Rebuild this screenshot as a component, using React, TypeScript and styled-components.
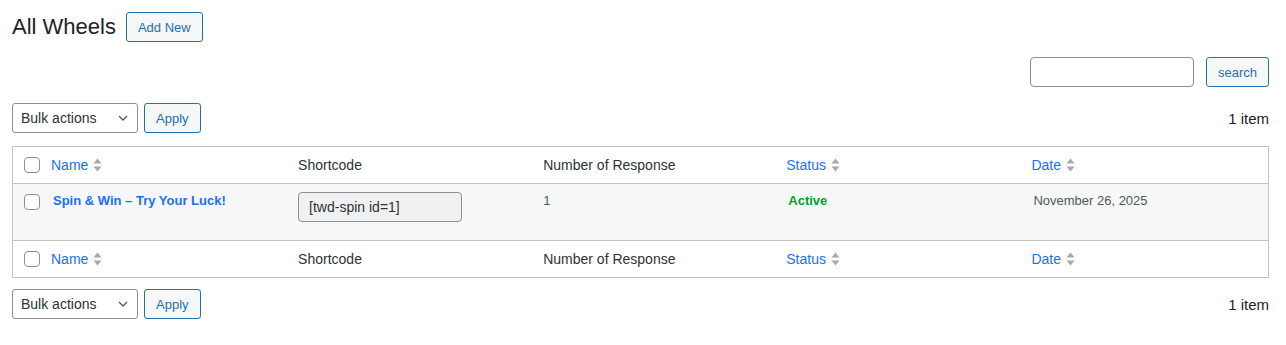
import styled, {createGlobalStyle} from "styled-components";

const GlobalStyle = createGlobalStyle`
body {
    margin: 0;
    background: #fff;
    font-family: "Liberation Sans", Arial, sans-serif;
    color: #1d2327;
}
`;

const LINK = "#1d6ff2";

const Page = styled.div`
padding: 0 17px 0 12px;
`;

const TitleRow = styled.div`
display: flex;
align-items: center;
gap: 10px;
padding-top: 12px;
`;

const Title = styled.h1`
margin: 0;
font-size: 22px;
font-weight: 400;
line-height: 30px;
color: #1d2327;
`;

const Button = styled.button`
height: 30px;
padding: 0 11px;
border: 1px solid #2271b1;
border-radius: 3px;
background: #f6f7f7;
color: #2271b1;
font-family: inherit;
font-size: 13px;
cursor: pointer;
`;

const SearchRow = styled.div`
display: flex;
justify-content: flex-end;
gap: 12px;
margin-top: 15px;
`;

const SearchInput = styled.input`
width: 164px;
height: 30px;
box-sizing: border-box;
border: 1px solid #8c8f94;
border-radius: 4px;
`;

const TableNav = styled.div<{ $top?: boolean }>`
display: flex;
align-items: center;
justify-content: space-between;
margin: ${p => p.$top ? "16px 0 13px" : "11px 0 0"};
`;

const Actions = styled.div`
display: flex;
gap: 6px;
`;

const Select = styled.div`
display: flex;
align-items: center;
justify-content: space-between;
width: 126px;
height: 30px;
box-sizing: border-box;
padding: 0 8px 0 8px;
border: 1px solid #8c8f94;
border-radius: 3px;
font-size: 14px;
color: #2c3338;
svg {
    width: 12px;
    height: 12px;
}
`;

const Count = styled.span`
font-size: 15px;
color: #1d2327;
`;

const Table = styled.table`
width: 100%;
table-layout: fixed;
border-collapse: collapse;
border: 1px solid #c3c4c7;
`;

const HeadCell = styled.th<{ $sort?: boolean }>`
height: 36px;
padding: 0 0 0 ${p => p.$sort ? "8px" : "10px"};
text-align: left;
font-weight: 400;
font-size: 14px;
color: #2c3338;
`;

const CheckCell = styled.td`
width: 19px;
padding: 0 0 0 11px;
`;

const BodyRow = styled.tr`
background: #f6f7f7;
border-top: 1px solid #c3c4c7;
border-bottom: 1px solid #c3c4c7;
td {
    vertical-align: top;
    height: 57px;
    box-sizing: border-box;
}
`;

const BodyCell = styled.td`
padding: 9px 0 0 10px;
font-size: 13px;
color: #50575e;
`;

const Box = styled.span<{ $top?: number }>`
display: block;
width: 16px;
height: 16px;
margin-top: ${p => p.$top ?? 0}px;
box-sizing: border-box;
border: 1px solid #8c8f94;
border-radius: 4px;
background: #fff;
`;

const SortLink = styled.a`
display: inline-flex;
align-items: center;
gap: 5px;
color: ${LINK};
text-decoration: none;
`;

const RowTitle = styled.a`
font-weight: 700;
color: ${LINK};
text-decoration: none;
font-size: 13px;
`;

const Shortcode = styled.div`
width: 164px;
height: 30px;
box-sizing: border-box;
margin-top: -1px;
padding: 0 10px;
display: flex;
align-items: center;
background: #f0f0f1;
border: 1px solid #8c8f94;
border-radius: 4px;
font-size: 14px;
color: #2c3338;
`;

const Status = styled.span`
font-weight: 700;
color: #00a32a;
`;

function SortArrows() {
    return <svg width="9" height="14" viewBox="0 0 9 14">
        <path d="M4.5 0.5 L8.5 5.5 H0.5 Z" fill="#a7aaad"/>
        <path d="M4.5 13.5 L8.5 8.5 H0.5 Z" fill="#a7aaad"/>
    </svg>;
}

function Chevron() {
    return <svg viewBox="0 0 12 12"><path d="M2 4 L6 8 L10 4" fill="none" stroke="#50575e" strokeWidth="1.3"/></svg>;
}

function HeaderRow() {
    return <tr>
        <CheckCell><Box/></CheckCell>
        <HeadCell $sort><SortLink href="#">Name <SortArrows/></SortLink></HeadCell>
        <HeadCell>Shortcode</HeadCell>
        <HeadCell>Number of Response</HeadCell>
        <HeadCell $sort><SortLink href="#">Status <SortArrows/></SortLink></HeadCell>
        <HeadCell $sort><SortLink href="#">Date <SortArrows/></SortLink></HeadCell>
    </tr>;
}

function Nav({top}: { top?: boolean }) {
    return <TableNav $top={top}>
        <Actions>
            <Select>Bulk actions <Chevron/></Select>
            <Button>Apply</Button>
        </Actions>
        <Count>1 item</Count>
    </TableNav>;
}

export default function App() {
    return <Page>
        <GlobalStyle/>
        <TitleRow>
            <Title>All Wheels</Title>
            <Button>Add New</Button>
        </TitleRow>
        <SearchRow>
            <SearchInput/>
            <Button>search</Button>
        </SearchRow>
        <Nav top/>
        <Table>
            <thead><HeaderRow/></thead>
            <tbody>
                <BodyRow>
                    <CheckCell><Box $top={10}/></CheckCell>
                    <BodyCell><RowTitle href="#">Spin &amp; Win – Try Your Luck!</RowTitle></BodyCell>
                    <BodyCell><Shortcode>[twd-spin id=1]</Shortcode></BodyCell>
                    <BodyCell>1</BodyCell>
                    <BodyCell><Status>Active</Status></BodyCell>
                    <BodyCell>November 26, 2025</BodyCell>
                </BodyRow>
            </tbody>
            <tfoot><HeaderRow/></tfoot>
        </Table>
        <Nav/>
    </Page>;
}
